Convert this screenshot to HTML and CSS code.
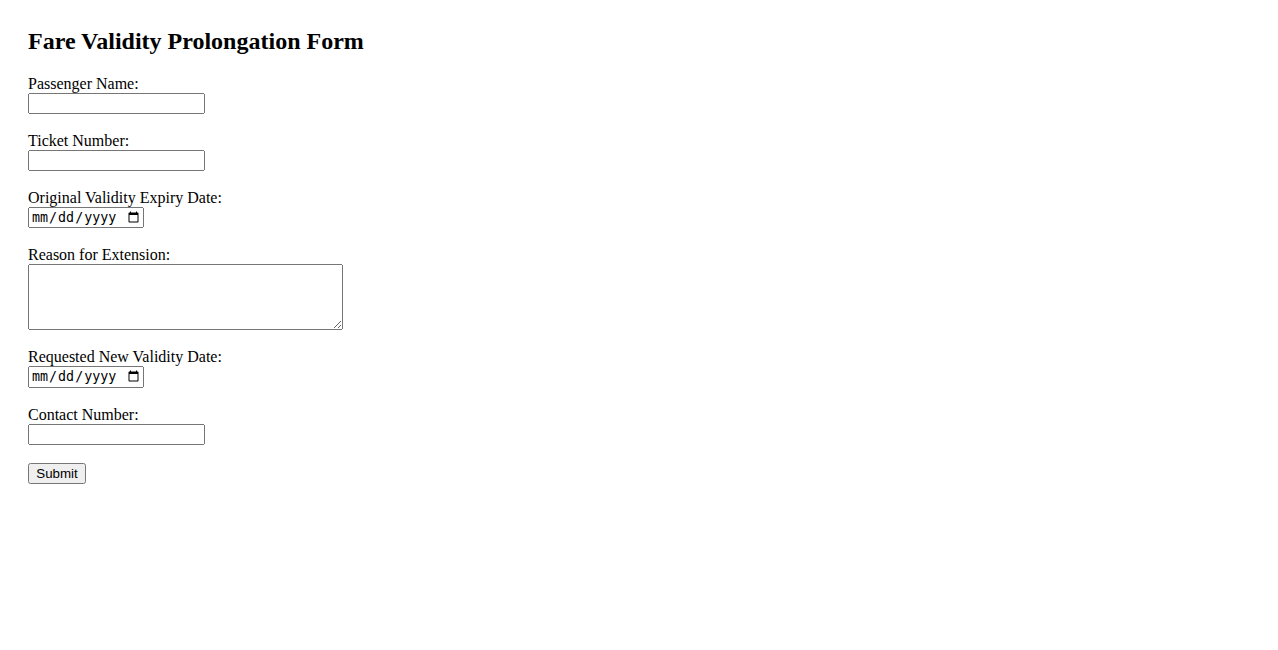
FILE: index.html
```html
<!DOCTYPE html>
<html lang="en">
<head>
<meta charset="utf-8">
<title>Fare Validity Prolongation Form</title>
<link rel="stylesheet" href="styles.css">
</head>
<body>
<div class="page">
<h2 class="title">Fare Validity Prolongation Form</h2>
<form class="form">
<label for="name">Passenger Name:</label><br>
<input type="text" id="name" name="name" class="text"><br><br>
<label for="ticket">Ticket Number:</label><br>
<input type="text" id="ticket" name="ticket" class="text"><br><br>
<label for="orig">Original Validity Expiry Date:</label><br>
<input type="date" id="orig" name="orig" class="date"><br><br>
<label for="reason">Reason for Extension:</label><br>
<textarea id="reason" name="reason" class="reason"></textarea><br><br>
<label for="newdate">Requested New Validity Date:</label><br>
<input type="date" id="newdate" name="newdate" class="date"><br><br>
<label for="contact">Contact Number:</label><br>
<input type="text" id="contact" name="contact" class="text"><br><br>
<input type="submit" value="Submit" class="submit">
</form>
</div>
</body>
</html>
```
FILE: styles.css
```css
body {
  margin: 8px;
  font-family: "Liberation Serif", "Times New Roman", serif;
}
.page {
  padding: 20px;
}
.title {
  margin-top: 0;
  font-size: 24px;
}
.text {
  box-sizing: border-box;
  width: 177px;
}
.date {
  box-sizing: border-box;
  width: 116px;
}
.reason {
  box-sizing: border-box;
  width: 315px;
  height: 66px;
  vertical-align: bottom;
}
.submit {
  box-sizing: border-box;
  width: 58px;
}
```
